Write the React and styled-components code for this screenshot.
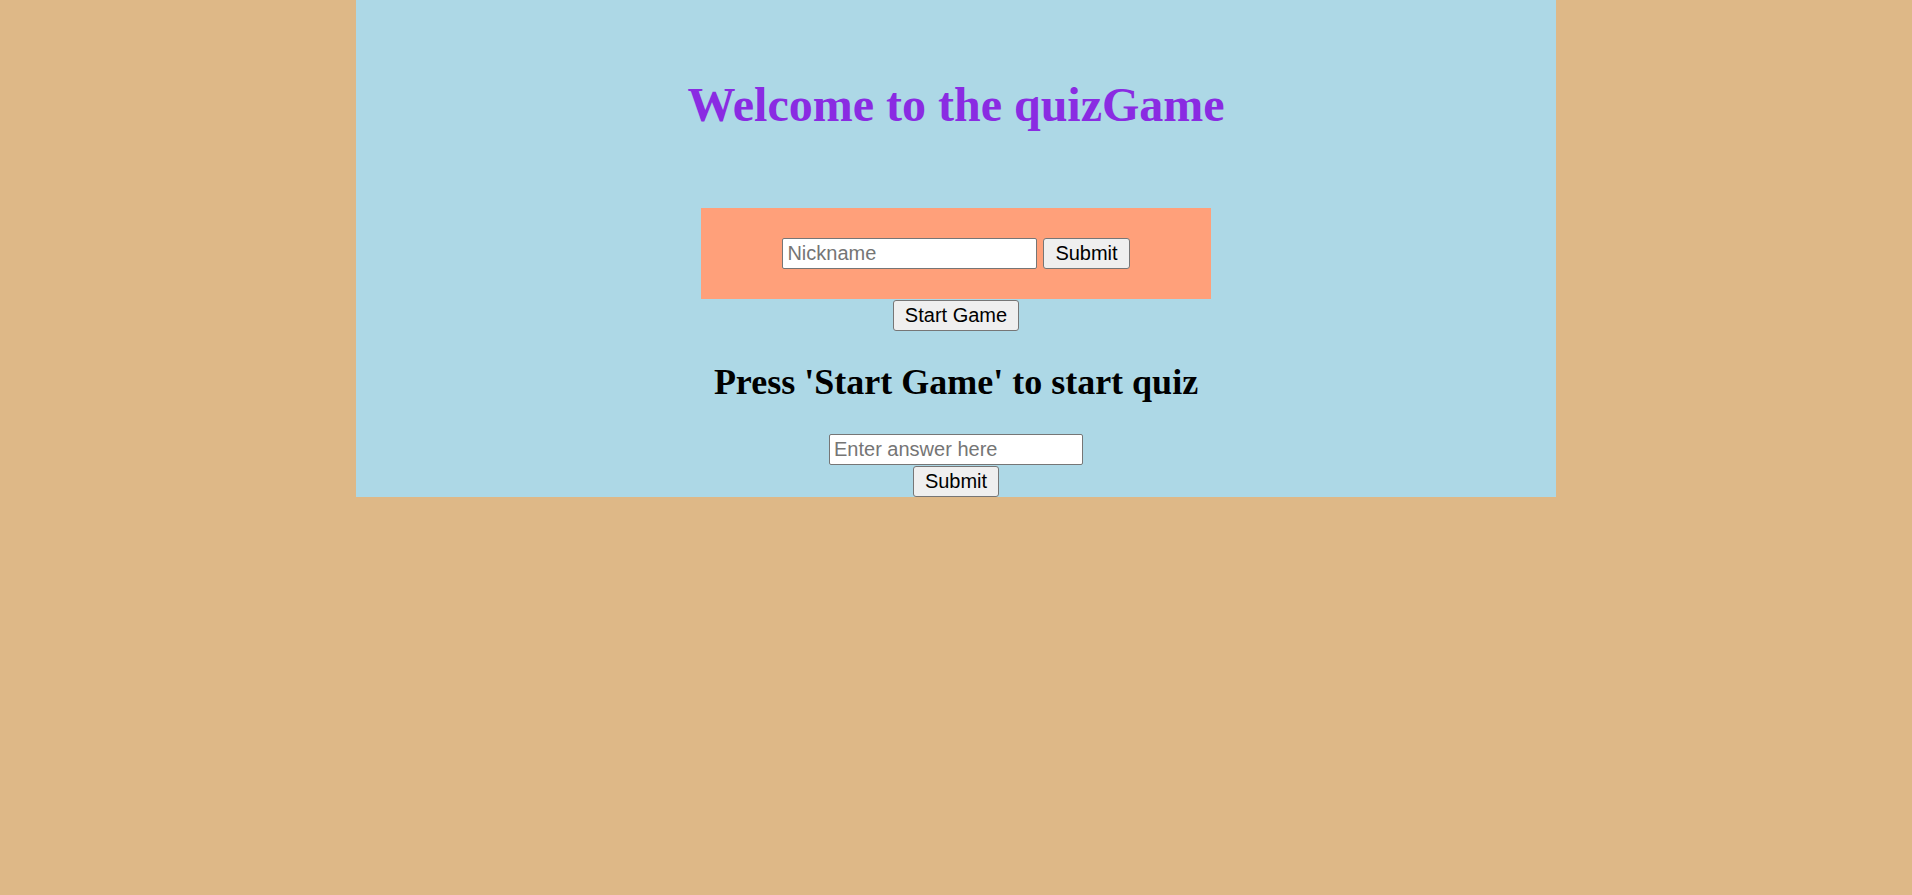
import React, { useState } from 'react';
import styled, { createGlobalStyle } from 'styled-components';

const GlobalStyle = createGlobalStyle`
  html, body {
    margin: 0;
    padding: 0;
    background-color: #deb887;
    min-height: 100vh;
  }
`;

const Panel = styled.div`
  width: 1200px;
  margin: 0 auto;
  background-color: #add8e6;
  display: flex;
  flex-direction: column;
  align-items: center;
  font-family: 'Liberation Serif', 'Times New Roman', serif;
`;

const Title = styled.h1`
  margin: 77px 0 76px;
  font-size: 48px;
  line-height: 55px;
  font-weight: 700;
  color: #8a2be2;
`;

const NickBox = styled.form`
  width: 510px;
  height: 91px;
  background-color: #ffa07a;
  display: flex;
  justify-content: center;
  align-items: center;
  gap: 6px;
`;

const TextInput = styled.input`
  box-sizing: border-box;
  width: ${p => p.$width || 255}px;
  height: 31px;
  padding: 0 4px;
  border: 1px solid #767676;
  border-radius: 2px;
  background: #fff;
  font-family: 'Liberation Sans', Arial, sans-serif;
  font-size: 20px;
  color: #000;
  outline: none;

  &::placeholder {
    color: #757575;
  }
`;

const Button = styled.button`
  box-sizing: border-box;
  height: 31px;
  margin-top: ${p => p.$top || 0}px;
  padding: 0 11px;
  border: 1px solid #767676;
  border-radius: 3px;
  background-color: #efefef;
  font-family: 'Liberation Sans', Arial, sans-serif;
  font-size: 20px;
  color: #000;
  cursor: pointer;
`;

const Prompt = styled.h2`
  margin: 31px 0 31px;
  font-size: 36px;
  line-height: 41px;
  font-weight: 700;
  color: #000;
`;

const App = () => {
  const [nickname, setNickname] = useState('');
  const [answer, setAnswer] = useState('');

  return (
    <>
      <GlobalStyle />
      <Panel>
        <Title>Welcome to the quizGame</Title>
        <NickBox onSubmit={e => e.preventDefault()}>
          <TextInput
            placeholder="Nickname"
            value={nickname}
            onChange={e => setNickname(e.target.value)}
          />
          <Button type="submit">Submit</Button>
        </NickBox>
        <Button $top={1}>Start Game</Button>
        <Prompt>Press 'Start Game' to start quiz</Prompt>
        <TextInput
          $width={254}
          placeholder="Enter answer here"
          value={answer}
          onChange={e => setAnswer(e.target.value)}
        />
        <Button $top={1}>Submit</Button>
      </Panel>
    </>
  );
};

export default App;
